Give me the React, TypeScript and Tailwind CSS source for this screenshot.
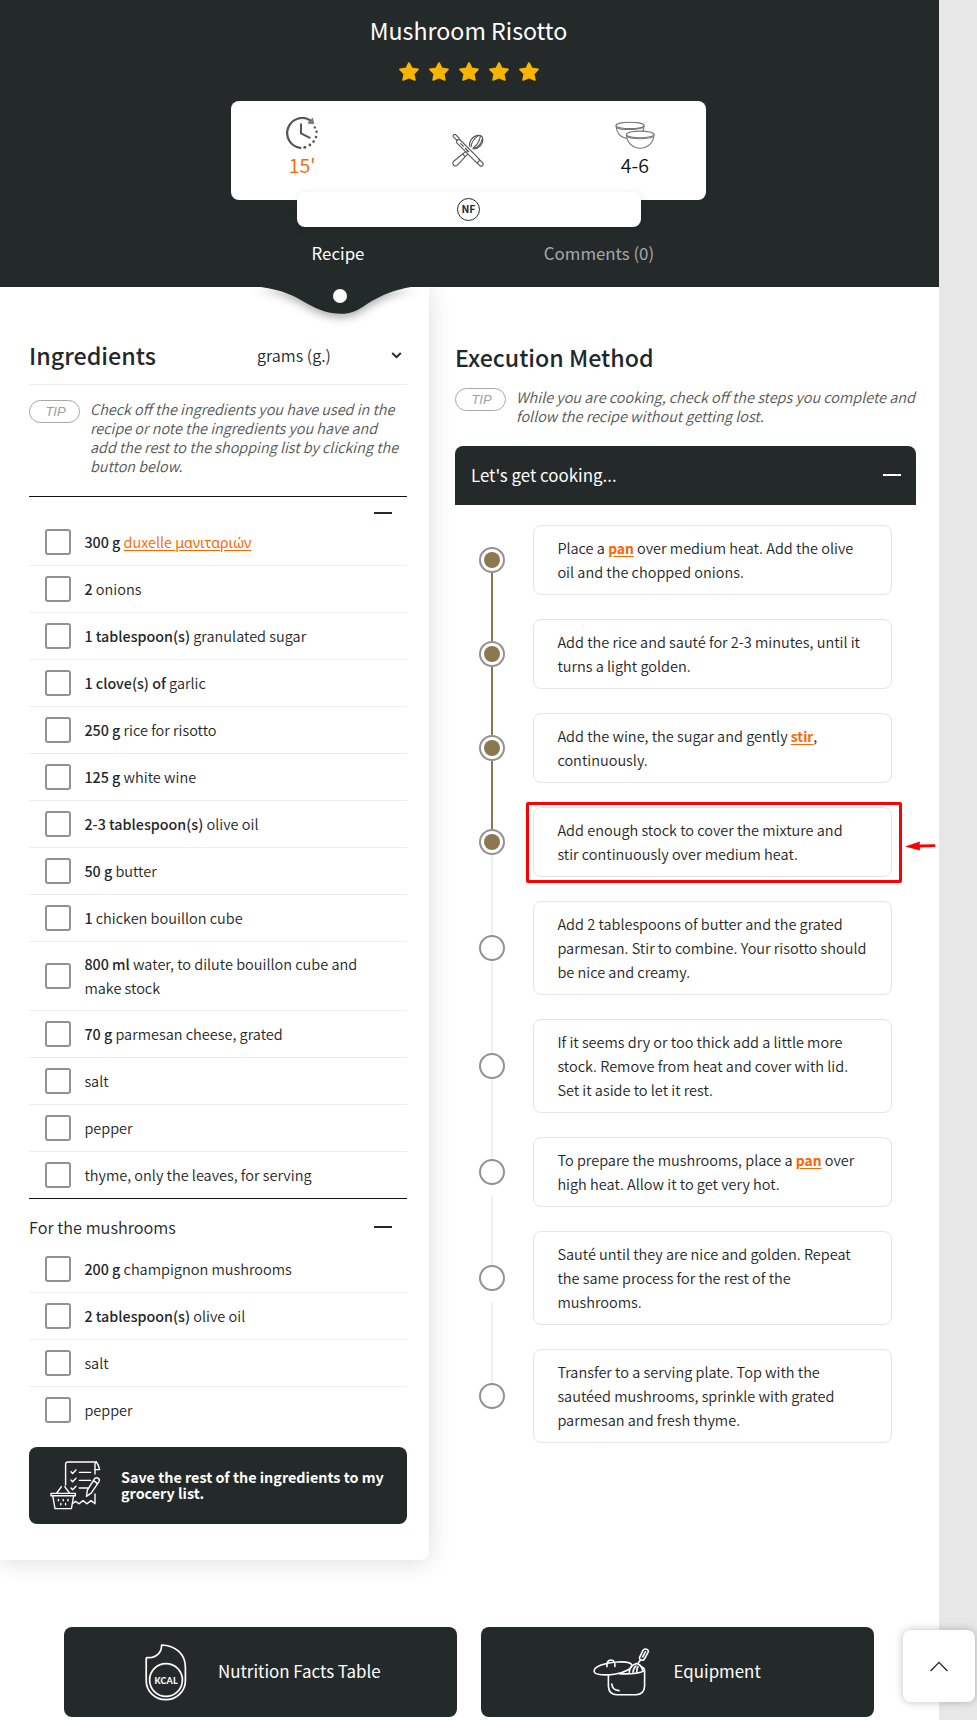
import React from "react";
import { clsx } from "clsx";

type Ingredient = { amount?: string; name: string; link?: boolean; tall?: boolean };

const MAIN: Ingredient[] = [
  { amount: "300 g", name: "duxelle ", link: true },
  { amount: "2", name: "onions" },
  { amount: "1 tablespoon(s)", name: "granulated sugar" },
  { amount: "1 clove(s) of", name: "garlic" },
  { amount: "250 g", name: "rice for risotto" },
  { amount: "125 g", name: "white wine" },
  { amount: "2-3 tablespoon(s)", name: "olive oil" },
  { amount: "50 g", name: "butter" },
  { amount: "1", name: "chicken bouillon cube" },
  { amount: "800 ml", name: "water, to dilute bouillon cube and make stock", tall: true },
  { amount: "70 g", name: "parmesan cheese, grated" },
  { name: "salt" },
  { name: "pepper" },
  { name: "thyme, only the leaves, for serving" },
];

const MUSHROOMS: Ingredient[] = [
  { amount: "200 g", name: "champignon mushrooms" },
  { amount: "2 tablespoon(s)", name: "olive oil" },
  { name: "salt" },
  { name: "pepper" },
];

const Term = ({ children }: { children: React.ReactNode }) => (
  <a className="text-[13.8px] font-bold text-[#ff6400] underline underline-offset-2">{children}</a>
);

const STEPS: { lines: React.ReactNode[]; boxed?: boolean; done?: boolean; doneLine?: boolean; gap?: boolean }[] = [
  { lines: [<>Place a <Term>pan</Term> over medium heat. Add the olive</>, "oil and the chopped onions."], done: true, doneLine: true },
  { lines: ["Add the rice and sauté for 2-3 minutes, until it", "turns a light golden."], done: true, doneLine: true },
  { lines: [<>Add the wine, the sugar and gently <Term>stir</Term>,</>, "continuously."], done: true, doneLine: true },
  { lines: ["Add enough stock to cover the mixture and", "stir continuously over medium heat."], done: true, boxed: true },
  { lines: ["Add 2 tablespoons of butter and the grated", "parmesan. Stir to combine. Your risotto should", "be nice and creamy."] },
  { lines: ["If it seems dry or too thick add a little more", "stock. Remove from heat and cover with lid.", "Set it aside to let it rest."] },
  { lines: [<>To prepare the mushrooms, place a <Term>pan</Term> over</>, "high heat. Allow it to get very hot."], gap: true },
  { lines: ["Sauté until they are nice and golden. Repeat", "the same process for the rest of the", "mushrooms."], gap: true },
  { lines: ["Transfer to a serving plate. Top with the", "sautéed mushrooms, sprinkle with grated", "parmesan and fresh thyme."] },
];

function Star() {
  return (
    <svg width="20" height="19" viewBox="0 0 20 19">
      <path d="M10 1.2 L12.7 6.6 L18.9 7.4 L14.5 11.7 L15.7 17.8 L10 15.4 L4.3 17.8 L5.5 11.7 L1.1 7.4 L7.3 6.6 Z" fill="#f8b500" stroke="#f8b500" strokeWidth="2" strokeLinejoin="round" />
    </svg>
  );
}

function ClockIcon() {
  return (
    <svg width="32" height="32" viewBox="0 0 32 32" fill="none" stroke="#575757" strokeLinecap="round">
      <path d="M14.3 30.9 A15 15 0 1 1 24.6 3.6" strokeWidth="2.3" />
      <path d="M26.6 1.4 L27.6 6.6 L22.3 6.1 Z" fill="#777" stroke="#777" strokeWidth="1" strokeLinejoin="round" />
      <path d="M15 6.4 V16.4 L24.4 21.2" strokeWidth="2" strokeLinecap="butt" />
      <g fill="#575757" stroke="none">
        <circle cx="28.8" cy="10.4" r="1.2" />
        <circle cx="30.6" cy="14.8" r="1.25" />
        <circle cx="30" cy="20" r="1.3" />
        <circle cx="27.6" cy="24.6" r="1.35" />
        <circle cx="23.9" cy="28" r="1.4" />
        <circle cx="18.8" cy="30.2" r="1.5" />
      </g>
    </svg>
  );
}

function ToolsIcon() {
  return (
    <svg width="32" height="33" viewBox="0 0 32 33" fill="none" stroke="#555" strokeWidth="1.1" strokeLinejoin="round">
      <path d="M13.6 17.6 L1.7 27.2 A2.5 2.5 0 1 0 5.4 31.2 L15.6 20.2" />
      <path d="M10.6 19.8 L13 22.6" />
      <path d="M17.6 12.6 C16.6 8 20 2.4 26 1.4 Q30.3 1 30.8 5 C31 11 25.6 15 21.4 15" />
      <path d="M19 13.2 C19.4 8.6 22.5 4 26.6 1.6 M20.6 14.4 C24.6 11.6 27.6 8 28.4 1.9 M21 14.8 C25.6 13.8 29.6 9.6 30.6 4.2" />
      <path d="M8.2 6 L21.4 19.2 L26.8 24.7 A2.2 2.2 0 0 1 23.7 27.8 L5.1 9.2 A2.2 2.2 0 0 1 8.2 6 Z" fill="#fff" />
      <path d="M5.4 6.9 L1.3 2.8 A1.7 1.7 0 0 1 3.6 .6 L7.6 4.7" />
      <path d="M8.4 9.3 L11.8 12.7 M13 14 L17 18 M14.5 17.3 L15.3 18.1" strokeWidth="1.2" />
      <path d="M26.8 25 L30.7 28.9 A2 2 0 0 1 27.9 31.7 L24.2 28" />
    </svg>
  );
}

function BowlsIcon() {
  return (
    <svg width="40" height="29" viewBox="0 0 40 29" fill="none" stroke="#777" strokeWidth="1.1">
      <ellipse cx="15" cy="4.4" rx="14" ry="3.2" />
      <path d="M1 4.6 C1.2 11 5 16.6 12 17.2" />
      <path d="M1.2 6.4 C6 9.2 21 9.4 29 6.2" />
      <path d="M29 4.6 Q29 7.6 27.8 10.2" />
      <path d="M11.4 13.6 C11.6 21.6 17.6 27.4 25.4 27.4 C33.2 27.4 38.8 21.6 39 13.6 Z" fill="#fff" stroke="none" />
      <ellipse cx="25.2" cy="13.4" rx="13.8" ry="3.3" fill="#fff" />
      <path d="M11.4 13.6 C11.6 21.6 17.6 27.3 25.2 27.3 C32.8 27.3 38.8 21.6 39 13.6" />
      <path d="M11.8 15.6 C17 18.4 33 18.4 38.6 15.6" />
    </svg>
  );
}

function GroceryIcon() {
  return (
    <svg width="51" height="49" viewBox="0 0 51 49" fill="none" stroke="#fff" strokeWidth="1.4" strokeLinejoin="round" strokeLinecap="round">
      <path d="M15.6 24 V3.4 Q15.6 1 18 1 H46.4 Q45 1.4 45 3.4 V13" />
      <path d="M46.4 1 Q48.8 4.2 49.6 8.6 H45" />
      <path d="M45 33 V42.8 L41 39.6 L37 42.8 L33 39.6 L29 42.8 L25.6 40.4 L23.6 42" />
      <path d="M21 10.8 L22.6 12.6 L26 9 M21 19 L22.6 20.8 L26 17.2 M21 27 L22.6 28.8 L26 25.2" />
      <path d="M29.4 11.4 H40.6 M29.4 19.4 H40.6 M29.4 27 H37.4" />
      <path d="M36.4 35.4 L37.4 29 L45 17.2 Q46.6 16.2 48.4 17.4 Q50 18.6 49 20.6 L41.2 32.2 Z M43.6 19.6 L47.2 22.4" />
      <path d="M1 32.4 H25.4 V34.8 H1 Z M2.8 35 L5 47.6 H21.4 L23.6 35" />
      <path d="M6.8 32 L11.4 25.6 M19.4 32 L14.8 25.6" />
      <path d="M8.4 38.4 V39.8 M13.2 38.4 V39.8 M18 38.4 V39.8 M10.8 42.4 V43.8 M15.6 42.4 V43.8" />
    </svg>
  );
}

function KcalIcon() {
  return (
    <svg width="42" height="57" viewBox="0 0 42 57" fill="none" stroke="#fff" strokeWidth="1.7" strokeLinejoin="round">
      <path d="M16.6 1 C30 1.4 40.4 9.6 40.4 23.4 V36.4 A19.6 19.3 0 0 1 1.2 36.4 V14.8 Q1.2 13.4 3 13.6 C11 14 16.8 8.6 16.6 1 Z" />
      <circle cx="21" cy="36" r="16.4" />
      <text x="21.2" y="39.6" textAnchor="middle" fontSize="8.8" fontWeight="900" letterSpacing=".2" fill="#fff" stroke="none" className="font-['Lato',sans-serif]">KCAL</text>
    </svg>
  );
}

function PotIcon() {
  return (
    <svg width="57" height="48" viewBox="0 0 57 48" fill="none" stroke="#fff" strokeWidth="1.6" strokeLinejoin="round" strokeLinecap="round">
      <path d="M15.4 27 V38.4 Q16 46.8 24 46.8 H43 Q51 46.6 51.6 38.4 V22.4" />
      <path d="M18.8 36 Q19.2 42.2 26 42.6" />
      <path d="M1.2 23.6 C.4 18.4 12.6 14.6 25 14 C33.6 13.6 38.4 15 38.8 17.2 C38.8 20.6 32 24.4 22.8 26 C13.6 27.4 2 27.4 1.2 23.6 Z" />
      <path d="M14 18.6 Q13.4 12.2 18 12 Q22.2 12 22 18.4" />
      <path d="M26 25.6 C38 26.4 51 25 51.4 21.6 Q51.2 19.8 48.6 18.8" />
      <path d="M36.2 24.4 Q36.4 17.6 43.4 15.6 Q48 16 49.8 22.6 M40 24.4 Q40.4 20 43 18 M43.6 24.4 Q43.6 21 45 18.6" />
      <path d="M45 15.4 L47.4 12 M46.6 9.4 L50 2.4 Q51.2 .4 53.6 1.2 Q56 2.2 55 4.4 L51.4 11 Q50.4 12.8 48.2 12 Q46 11.2 46.6 9.4 Z M49.6 9 L52.4 3.8" />
    </svg>
  );
}

function TipPill() {
  return (
    <span className="box-border flex h-[23px] w-[51px] shrink-0 items-center justify-center rounded-full border border-[#a8a8a8] pl-[2px] font-['Liberation_Sans',sans-serif] text-[13px] italic leading-none text-[#a0a0a0]">TIP</span>
  );
}

function IngredientRow({ item, last }: { item: Ingredient; last: boolean }) {
  return (
    <li className={clsx("flex items-center pl-4", item.tall ? "h-[69px]" : last ? "h-[46px]" : "h-[47px]", !last && "border-b border-[#ededed]")}>
      <span className="h-[26px] w-[26px] shrink-0 rounded-[3px] border-2 border-[#929292]" />
      <span className="ml-[13.4px] w-[290px] text-[14.5px] leading-6">
        {item.amount && <b className="text-[14.3px] font-medium">{item.amount} </b>}
        {item.link ? (
          <a className="text-[#ff6400] underline underline-offset-2">{item.name}<span className="font-['Noto_Sans',sans-serif] text-[14.2px] font-normal leading-5">μανιταριών</span></a>
        ) : (
          item.name
        )}
      </span>
    </li>
  );
}

function Header() {
  return (
    <header className="flex h-[287px] flex-col items-center bg-[#242a2a] pr-[2px] pt-[14px] text-white">
      <h1 className="h-8 text-[23.2px] font-normal leading-8">Mushroom Risotto</h1>
      <div className="mt-4 flex h-[19px] gap-[10px]">
        {[0, 1, 2, 3, 4].map((n) => <Star key={n} />)}
      </div>
      <div className="mt-5 grid h-[99px] w-[475px] grid-cols-3 rounded-lg bg-white text-[#111]">
        <div className="flex flex-col items-center pr-[16px] pt-4">
          <ClockIcon />
          <span className="mt-1 text-[19.6px] leading-6 text-[#ff6400]">15'</span>
        </div>
        <div className="flex justify-center pt-[33px]"><ToolsIcon /></div>
        <div className="flex flex-col items-center pl-[16px] pt-5">
          <BowlsIcon />
          <span className="mt-[3px] text-[19.6px] leading-6">4-6</span>
        </div>
      </div>
      <div className="relative -mt-2 flex h-[35px] w-[344px] items-center justify-center rounded-lg bg-white shadow-[0_2px_8px_rgba(0,0,0,0.12)]">
        <span className="flex h-[23px] w-[23px] items-center justify-center rounded-full border border-[#242a2a] text-[10.5px] font-bold leading-none text-[#242a2a]">NF</span>
      </div>
      <nav className="mt-[14px] flex w-[522px] text-[16.85px] font-normal leading-6">
        <a className="w-1/2 text-center">Recipe</a>
        <a className="w-1/2 text-center text-[#a7a9a9]">Comments (0)</a>
      </nav>
    </header>
  );
}

function IngredientsCard() {
  return (
    <section className="h-[1273px] w-[429px] rounded-br-lg bg-white pl-[29px] pr-[22px] shadow-[0_2px_24px_rgba(0,0,0,0.14)]">
      <div className="flex h-[98px] items-center border-b border-[#ededed] pt-[42px]">
        <h2 className="-mt-1 w-[228px] text-[23.3px] font-medium leading-8 text-[#1f292c]">Ingredients</h2>
        <span className="-mt-[3px] flex-1 text-[16.2px] leading-6">grams (g.)</span>
        <svg className="-mt-[2px] mr-[5px]" width="11" height="7" viewBox="0 0 11 7" fill="none" stroke="#242a2a" strokeWidth="2"><path d="M1.2 1 L5.5 5.2 L9.8 1" /></svg>
      </div>
      <div className="flex h-[111px] pt-[15px]">
        <TipPill />
        <p className="-mt-px ml-[10px] whitespace-nowrap text-[14.42px] italic leading-[19px] text-[#555]">
          Check off the ingredients you have used in the<br />recipe or note the ingredients you have and<br />add the rest to the shopping list by clicking the<br />button below.
        </p>
      </div>
      <div className="flex h-[23px] items-center justify-end border-t border-[#111] pr-[15px] pt-[9px]">
        <span className="h-[2px] w-[18px] bg-[#242a2a]" />
      </div>
      <ul>{MAIN.map((item, i) => <IngredientRow key={i} item={item} last={i === MAIN.length - 1} />)}</ul>
      <div className="flex h-12 items-center justify-between border-t border-[#111] pr-[15px] pt-2">
        <h3 className="text-[16.3px] leading-6">For the mushrooms</h3>
        <span className="h-[2px] w-[18px] bg-[#242a2a]" />
      </div>
      <ul>{MUSHROOMS.map((item, i) => <IngredientRow key={i} item={item} last={i === MUSHROOMS.length - 1} />)}</ul>
      <button className="mt-[14px] flex h-[77px] w-full items-center rounded-lg bg-[#242a2a] pl-[21px] text-left text-white">
        <GroceryIcon />
        <span className="-mt-[2px] ml-5 whitespace-nowrap text-[14.35px] font-bold leading-4">Save the rest of the ingredients to my<br />grocery list.</span>
      </button>
    </section>
  );
}

function MethodColumn() {
  return (
    <section className="ml-[26px] w-[461px] pt-[54px]">
      <h2 className="h-8 text-[23.2px] font-medium leading-8 text-[#1f292c]">Execution Method</h2>
      <div className="mt-[15px] flex h-[58px]">
        <TipPill />
        <p className="-mt-px ml-[10px] whitespace-nowrap text-[14.45px] italic leading-[19px] text-[#555]">
          While you are cooking, check off the steps you complete and<br />follow the recipe without getting lost.
        </p>
      </div>
      <div className="flex h-[59px] items-center justify-between rounded-t-lg bg-[#242a2a] pl-4 pr-[15px] text-white">
        <h3 className="-mt-[2px] text-[16.9px] font-normal">Let's get cooking...</h3>
        <span className="-mt-px h-[2px] w-[18px] bg-white" />
      </div>
      <ol className="mt-5">
        {STEPS.map((s, i) => {
          const first = i === 0;
          const last = i === STEPS.length - 1;
          const prevDone = !first && STEPS[i - 1].doneLine;
          return (
            <li key={i}>
              <div className="flex">
                <div className="flex w-[74px] flex-col items-center">
                  <span className={clsx("w-[2px] flex-1", first ? "bg-transparent" : prevDone ? "bg-[#8c774f]" : "bg-[#efefef]")} />
                  <span className="flex h-[26px] w-[26px] items-center justify-center rounded-full border-2 border-[#929292] bg-white">
                    {s.done && <span className="h-4 w-4 rounded-full bg-[#8c774f]" />}
                  </span>
                  <span className="flex w-[2px] flex-1 flex-col">
                    <span className={clsx("flex-1", s.gap && "mt-[11px]", last ? "bg-transparent" : s.doneLine ? "bg-[#8c774f]" : "bg-[#efefef]")} />
                  </span>
                </div>
                <div className="relative ml-1 w-[359px] whitespace-nowrap rounded-lg border border-[#e4e4e4] bg-white py-[10px] pl-[23.4px] text-[14.5px] leading-6">
                  {s.lines.map((l, j) => <p key={j} className="h-6">{l}</p>)}
                  {s.boxed && (
                    <>
                      <span className="absolute -left-2 -top-[6px] h-[81px] w-[376px] rounded-[2px] border-[3px] border-[#ff0000]" />
                      <svg className="absolute left-[371px] top-[33px]" width="31" height="10" viewBox="0 0 31 10" fill="#ff0000">
                        <path d="M0 5.6 L15 .6 L14.6 3.6 L30 3.2 Q31 4.6 30 6 L14.8 6.6 L15 9.4 Z" />
                      </svg>
                    </>
                  )}
                </div>
              </div>
              {!last && (
                <div className="flex h-6 w-[74px] justify-center">
                  <span className={clsx("w-[2px]", s.doneLine ? "bg-[#8c774f]" : "bg-[#efefef]")} />
                </div>
              )}
            </li>
          );
        })}
      </ol>
    </section>
  );
}

export default function App() {
  return (
    <div className="relative h-[1720px] w-[977px] overflow-hidden bg-[#e7e7e7] font-['Noto_Sans_CJK_JP',sans-serif] font-[350] text-[#1f2629]">
      <div className="h-full w-[939px] bg-white">
        <div className="relative z-10">
          <Header />
          <svg className="absolute left-[240px] top-[287px]" width="200" height="50" viewBox="0 0 200 50">
            <defs>
              <filter id="notch" x="-20%" y="-50%" width="140%" height="260%"><feDropShadow dx="0" dy="4" stdDeviation="4" floodOpacity=".3" /></filter>
              <clipPath id="below"><rect width="200" height="50" /></clipPath>
            </defs>
            <g clipPath="url(#below)">
              <path d="M14 -1 L21 0 C42 3 53 8 66 16 C79 23 88 26.8 101 26.8 C111 26.8 117 24 127 17 C141 8 156 2.5 171 0 L178 -1 Z" fill="#242a2a" filter="url(#notch)" />
            </g>
            <circle cx="100" cy="9" r="7" fill="#fafafa" />
          </svg>
        </div>
        <main className="flex">
          <IngredientsCard />
          <MethodColumn />
        </main>
        <div className="mt-[67px] flex gap-6 pl-16 text-[16.9px] font-normal text-white">
          <a className="flex h-[90px] w-[393px] items-center rounded-lg bg-[#242a2a] pl-[81px]">
            <KcalIcon />
            <span className="-mt-[2px] ml-[31px]">Nutrition Facts Table</span>
          </a>
          <a className="flex h-[90px] w-[393px] items-center rounded-lg bg-[#242a2a] pl-[112px]">
            <PotIcon />
            <span className="-mt-[2px] ml-[23.5px]">Equipment</span>
          </a>
        </div>
      </div>
      <button className="absolute left-[903px] top-[1630px] z-20 flex h-[72px] w-[72px] items-center justify-center rounded-lg bg-white shadow-[0_0_8px_rgba(0,0,0,0.25)]">
        <svg width="18" height="11" viewBox="0 0 18 11" fill="none" stroke="#222" strokeWidth="1.3"><path d="M.6 10 L9 1.4 L17.4 10" /></svg>
      </button>
    </div>
  );
}
